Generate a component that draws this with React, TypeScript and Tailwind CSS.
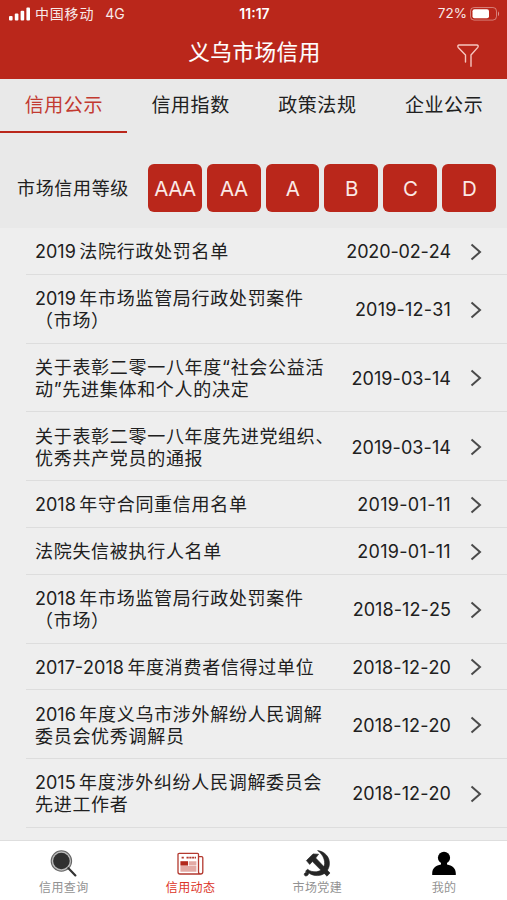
import { useState } from 'react';
import type { ReactNode } from 'react';

interface Notice {
  title: string;
  date: string;
}

interface NavItem {
  label: string;
  icon: ReactNode;
}

const tabs = ['信用公示', '信用指数', '政策法规', '企业公示'];

const grades = ['AAA', 'AA', 'A', 'B', 'C', 'D'];

const notices: Notice[] = [
  { title: '2019法院行政处罚名单', date: '2020-02-24' },
  { title: '2019年市场监管局行政处罚案件\n（市场）', date: '2019-12-31' },
  { title: '关于表彰二零一八年度“社会公益活\n动”先进集体和个人的决定', date: '2019-03-14' },
  { title: '关于表彰二零一八年度先进党组织、\n优秀共产党员的通报', date: '2019-03-14' },
  { title: '2018年守合同重信用名单', date: '2019-01-11' },
  { title: '法院失信被执行人名单', date: '2019-01-11' },
  { title: '2018年市场监管局行政处罚案件\n（市场）', date: '2018-12-25' },
  { title: '2017-2018年度消费者信得过单位', date: '2018-12-20' },
  { title: '2016年度义乌市涉外解纷人民调解\n委员会优秀调解员', date: '2018-12-20' },
  { title: '2015年度涉外纠纷人民调解委员会\n先进工作者', date: '2018-12-20' },
];

function SearchIcon() {
  return (
    <svg className="h-7 w-7" viewBox="0 0 28 28" fill="none">
      <circle cx="12.4" cy="12" r="10.2" stroke="#666" strokeWidth="1.1" fill="#bdbdbd" />
      <circle cx="12.4" cy="12" r="8.3" fill="#303030" />
      <path d="M19.4 19.2l7 7.2" stroke="#333" strokeWidth="2.2" strokeLinecap="round" />
    </svg>
  );
}

function NewsIcon() {
  return (
    <svg className="h-7 w-7" viewBox="0 0 28 28" fill="none" stroke="#b3392f" strokeWidth="1.3">
      <path d="M22.5 8V5.3Q22.5 4.3 21.5 4.3H3.2Q2 4.3 2 5.5V23Q2 25 4 25H24.5Q26.8 25 26.8 22.7V8.8Q26.8 7.6 25.6 7.6H22.5V22.7Q22.5 25 24.5 25" />
      <path d="M5.6 8.6h2.2M10.5 8.6h9.5" strokeWidth="1.8" strokeDasharray="2.2 0.6" />
      <path d="M4.4 12.2h7.6v4.4H4.4z" fill="#b3281c" stroke="none" />
      <path d="M12.8 12.2h7.6v4.4h-7.6zM4.4 17.1h16v5.7h-16z" fill="#e3aaa5" stroke="none" />
    </svg>
  );
}

function PartyIcon() {
  return (
    <svg className="h-7 w-7" viewBox="0 0 28 28" fill="#252525" stroke="#252525" strokeWidth="0.6" strokeLinejoin="round">
      <path d="M14.6 1.6C22 2.5 27.1 8.4 26.4 15.5C25.8 21.7 21.1 26.4 14.7 26.6C11.2 26.7 8.2 25.7 5.9 23.9C5.4 25.5 4.5 27 2.9 27C1.8 27 1.1 26.1 1.3 25.1C1.5 24 2.5 23.4 3.6 23.3L2.6 22L4.7 20.3C7 22.4 10 22.9 13.3 22.7C18.3 22.2 21.4 19.1 21.6 14.6C21.8 9.5 19 4.8 14.6 1.6Z" />
      <path d="M3.4 11.6L10 4.9L15.6 5.2L12.7 9L27 24L24 27.2L9.4 12.6L6.7 15.4Z" />
    </svg>
  );
}

function PersonIcon() {
  return (
    <svg className="h-7 w-7" viewBox="0 0 28 28" fill="#000">
      <circle cx="14" cy="8.8" r="6.1" />
      <path d="M11 13h6v2.4C22 16.2 25.8 19 25.8 24.2v1.9H2.2v-1.9C2.2 19 6 16.2 11 15.4Z" />
    </svg>
  );
}

const navItems: NavItem[] = [
  { label: '信用查询', icon: <SearchIcon /> },
  { label: '信用动态', icon: <NewsIcon /> },
  { label: '市场党建', icon: <PartyIcon /> },
  { label: '我的', icon: <PersonIcon /> },
];

function StatusBar() {
  return (
    <div className="grid h-7 grid-cols-3 items-center pr-[7px] pl-[9px] text-[14px] leading-none">
      <div className="flex items-center">
        <svg className="h-3.5 w-[22px]" viewBox="0 0 22 14" fill="white">
          <rect x="0" y="9" width="3.6" height="4.4" rx="1" />
          <rect x="5.8" y="6.6" width="3.6" height="6.8" rx="1" />
          <rect x="11.6" y="3.8" width="3.6" height="9.6" rx="1" />
          <rect x="17.4" y="0.6" width="3.6" height="12.8" rx="1" />
        </svg>
        <span className="ml-1 tracking-[0.8px] opacity-90">中国移动</span>
        <span className="ml-[11px] opacity-90">4G</span>
      </div>
      <span className="text-center font-semibold">11:17</span>
      <div className="flex items-center justify-end">
        <span className="mr-[3px] text-[13.5px] opacity-90">72%</span>
        <svg className="h-3.5 w-[30px]" viewBox="0 0 30 14" fill="none">
          <rect x="0.5" y="0.5" width="26" height="12.6" rx="3.6" stroke="white" strokeOpacity="0.4" />
          <rect x="2.5" y="2.3" width="16.5" height="9" rx="2" fill="white" />
          <path d="M28 4.5c1.4.6 1.4 4 0 4.6z" fill="white" fillOpacity="0.5" />
        </svg>
      </div>
    </div>
  );
}

function NoticeTitle({ text }: { text: string }) {
  // A leading year gets a little air before the Chinese text
  const year = text.match(/^[\d-]+/)?.[0] ?? '';

  return (
    <p className="flex-1 whitespace-pre text-[18px] leading-[22px] tracking-[0.7px]">
      {year && <span className="mr-[3.5px] tracking-[0px] [font-kerning:none]">{year}</span>}
      {text.slice(year.length)}
    </p>
  );
}

function NoticeDate({ date }: { date: string }) {
  // The digit 1 is narrow, so dates with many of them are spaced wider
  const ones = date.split('1').length - 1;
  const letterSpacing = `${(ones * 1.15 - 1.5) / 10}px`;

  return (
    <span className="text-[18px] leading-[22px] [font-kerning:none]" style={{ letterSpacing }}>
      {date}
    </span>
  );
}

export default function App() {
  const [activeTab, setActiveTab] = useState(0);
  const [activeNav, setActiveNav] = useState(1);

  return (
    <div className="flex h-[900px] w-[507px] flex-col overflow-hidden bg-[#eeeeee] font-[Inter,'Noto_Sans_CJK_SC',sans-serif] text-[#202020]">
      <header className="h-[79px] shrink-0 bg-[#ba271b] text-white">
        <StatusBar />
        <div className="grid h-[51px] grid-cols-[1fr_auto_1fr] items-center">
          <h1 className="col-start-2 pb-[3px] pl-0.5 text-[21.5px] leading-7 font-normal tracking-[0.6px] [-webkit-text-stroke:0.15px_white]">
            义乌市场信用
          </h1>
          <button className="mt-[3px] mr-[27px] justify-self-end" aria-label="筛选">
            <svg className="h-6 w-6" viewBox="0 0 24 24" fill="none" stroke="#f6c6bf" strokeWidth="1.4" strokeLinejoin="round" strokeLinecap="round">
              <path d="M9.5 19V12L2.2 4.4C1.4 3.2 1.8 2 3.2 2H20.8C22.2 2 22.6 3.2 21.8 4.4L15 12V23.3" />
            </svg>
          </button>
        </div>
      </header>

      <nav className="grid h-[54px] shrink-0 grid-cols-4 bg-[#e9e9e9]">
        {tabs.map((tab, i) => (
          <button
            key={tab}
            onClick={() => setActiveTab(i)}
            className={`border-b-[2.5px] pt-0.5 pl-px text-[19px] tracking-[0.6px] ${
              i === activeTab ? 'border-[#ba271b] text-[#c23a30]' : 'border-transparent'
            }`}
          >
            {tab}
          </button>
        ))}
      </nav>

      <section className="flex h-[95px] shrink-0 items-center bg-[#e9e9e9] pt-[31px] pr-[11px] pb-4 pl-[17px]">
        <span className="w-[131px] pt-px text-[18px] tracking-[0.67px]">市场信用等级</span>
        <div className="grid flex-1 grid-cols-6 gap-[5px]">
          {grades.map((grade) => (
            <button
              key={grade}
              className="h-12 rounded-[6px] bg-[#ba271b] pt-0.5 text-[20.5px] tracking-[-0.6px] text-[#fbe9e6]"
            >
              {grade}
            </button>
          ))}
        </div>
      </section>

      <main className="flex-1 overflow-hidden pl-[26px]">
        {notices.map((notice) => (
          <div
            key={notice.title}
            className="flex items-center border-b-[1.5px] border-[#dddddd] pt-[13.3px] pr-[25px] pb-[10.5px] pl-[9px]"
          >
            <NoticeTitle text={notice.title} />
            <NoticeDate date={notice.date} />
            <svg className="mb-px ml-[19px] h-[18px] w-3" viewBox="0 0 12 18" fill="none" stroke="#4a4a4a" strokeWidth="2">
              <path d="M1.5 1.5L10 9L1.5 16.5" />
            </svg>
          </div>
        ))}
      </main>

      <footer className="grid h-[60px] shrink-0 grid-cols-4 border-t border-[#dedede] bg-white">
        {navItems.map((item, i) => (
          <button
            key={item.label}
            onClick={() => setActiveNav(i)}
            className={`flex flex-col items-center pt-2 text-[12px] leading-[18px] tracking-[0.4px] ${
              i === activeNav ? 'text-[#dc3528]' : 'text-[#929292]'
            }`}
          >
            {item.icon}
            <span className="mt-[1.5px] ml-px">{item.label}</span>
          </button>
        ))}
      </footer>
    </div>
  );
}
